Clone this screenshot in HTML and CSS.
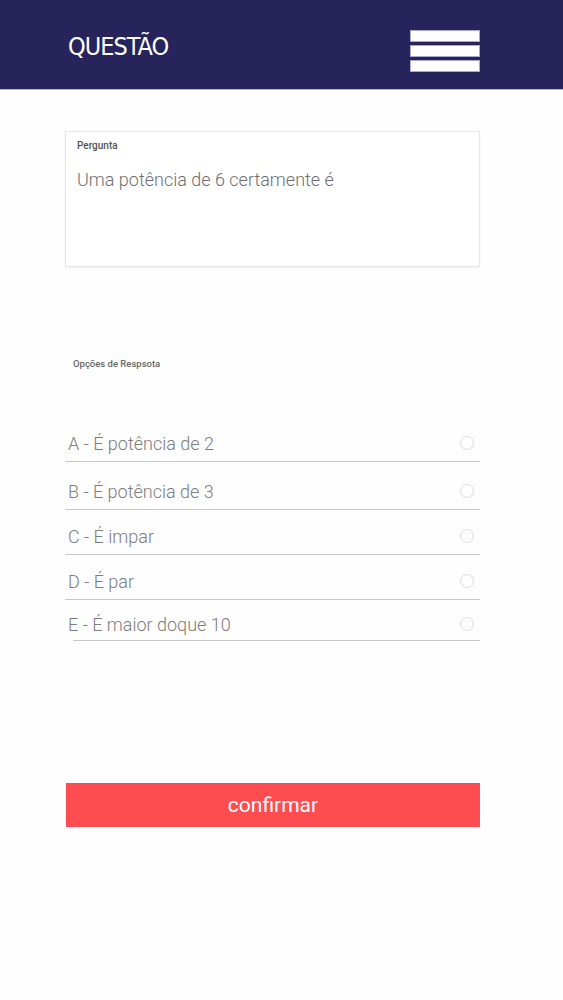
FILE: index.html
```html
<!DOCTYPE html>
<html lang="pt">
<head>
<meta charset="utf-8">
<title>Questão</title>
<link rel="stylesheet" href="styles.css">
</head>
<body>
<header class="topbar">
  <h1 class="title">QUESTÃO</h1>
  <div class="menu" aria-label="menu">
    <span class="bar"></span>
    <span class="bar"></span>
    <span class="bar"></span>
  </div>
</header>
<main class="content">
  <section class="card">
    <div class="card-label">Pergunta</div>
    <div class="card-text">Uma potência de 6 certamente é</div>
  </section>
  <div class="options-label">Opções de Respsota</div>
  <ul class="options">
    <li class="option tall"><span class="opt-text">A - É potência de 2</span><span class="radio"></span></li>
    <li class="option tall"><span class="opt-text">B - É potência de 3</span><span class="radio"></span></li>
    <li class="option"><span class="opt-text">C - É impar</span><span class="radio"></span></li>
    <li class="option"><span class="opt-text">D - É par</span><span class="radio"></span></li>
    <li class="option last"><span class="opt-text">E - É maior doque 10</span><span class="radio"></span></li>
  </ul>
  <button class="confirm">confirmar</button>
</main>
</body>
</html>
```
FILE: styles.css
```css
html, body {
  margin: 0;
  padding: 0;
  background: #fefefe;
  font-family: Roboto, "Noto Sans", sans-serif;
}
.topbar {
  height: 89px;
  background: #26245a;
  border-bottom: 1px solid #b9b8c8;
  display: flex;
  align-items: center;
  justify-content: space-between;
  padding: 0 83px 0 68px;
}
.title {
  margin: 3px 0 0;
  color: #fff;
  font-family: "DejaVu Sans", sans-serif;
  font-stretch: condensed;
  font-weight: 400;
  font-size: 25px;
  letter-spacing: -1px;
}
.menu {
  align-self: flex-start;
  margin-top: 30px;
  display: flex;
  flex-direction: column;
  gap: 3px;
}
.bar {
  display: block;
  width: 68px;
  height: 10px;
  background: #fff;
  border: 0.5px solid #a9a8d0;
}
.content {
  width: 415px;
  margin-left: 65px;
  padding-top: 41px;
}
.card {
  height: 136px;
  box-sizing: border-box;
  border: 1px solid #e6e6ea;
  box-shadow: 0 1px 2px rgba(0,0,0,0.06);
  padding: 8px 11px;
  background: #fff;
}
.card-label {
  font-size: 10px;
  font-weight: 500;
  color: #555;
}
.card-text {
  margin-top: 18px;
  font-size: 18px;
  font-weight: 300;
  color: #6e6e6e;
}
.options-label {
  margin-top: 91px;
  margin-left: 8px;
  font-size: 9.5px;
  line-height: 12px;
  font-weight: 500;
  color: #666;
}
.options {
  list-style: none;
  margin: 44px 0 0;
  padding: 0;
}
.option {
  display: flex;
  justify-content: space-between;
  align-items: flex-end;
  height: 45px;
  border-bottom: 1px solid #c8c8cc;
  padding: 0 6px 5px 3px;
  font-size: 18px;
  font-weight: 300;
  color: #7c7c7c;
  box-sizing: border-box;
}
.option.tall {
  height: 48px;
}
.opt-text {
  line-height: 24px;
}
.option.last {
  height: 41px;
  margin-left: 8px;
  padding-left: 0;
  padding-bottom: 3px;
}
.option.last .opt-text {
  margin-left: -5px;
}
.radio {
  width: 12px;
  height: 12px;
  border: 1px solid #dcdcdc;
  border-radius: 50%;
  margin-bottom: 6px;
}
.confirm {
  display: block;
  width: 414px;
  height: 44px;
  margin: 142px 0 0 1px;
  border: none;
  background: #fd4d50;
  color: #fff;
  font-family: Roboto, "Noto Sans", sans-serif;
  font-size: 21px;
  font-weight: 400;
  padding: 0;
}
```
